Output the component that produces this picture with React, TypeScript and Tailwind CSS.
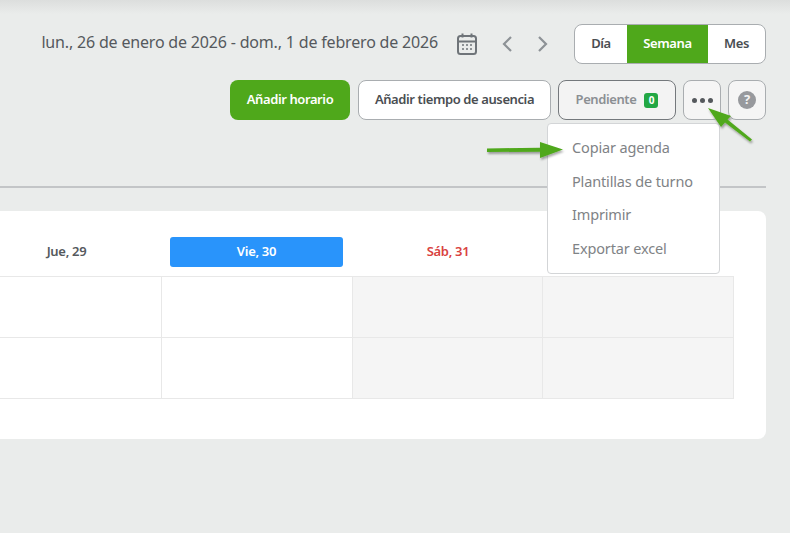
import React from 'react';

const fontStack = { fontFamily: '"Noto Sans", sans-serif' };

const menuItems = ['Copiar agenda', 'Plantillas de turno', 'Imprimir', 'Exportar excel'];

const CalendarIcon = () => (
    <svg width="22" height="24" viewBox="0 0 22 24" fill="none" stroke="#6f7479" strokeWidth="2">
        <rect x="2" y="4" width="18" height="18" rx="2.5" />
        <path d="M2 9.500h18M6.500 1.500v4M15.500 1.500v4" />
        <path d="M6 13h2M10 13h2M14 13h2M6 17h2M10 17h2M14 17h2" strokeWidth="1.6" />
    </svg>
);

const Chevron = ({ flip }: { flip?: boolean }) => (
    <svg width="12" height="18" viewBox="0 0 12 18" fill="none" stroke="#8d9296" strokeWidth="2.2" className={flip ? 'rotate-180' : ''}>
        <path d="M10 2 3 9l7 7" />
    </svg>
);

const App: React.FC = () => {
    return (
        <div className="relative h-[533px] w-[790px] overflow-hidden bg-[#eaeceb]" style={fontStack}>
            <div className="h-[14px] bg-gradient-to-b from-[#dcdedd] to-[#eaeceb]" />

            <div className="mr-[24px] mt-[10px] flex items-center justify-end">
                <span className="mb-[4px] text-[16px] tracking-[-0.18px] text-[#55595d]">lun., 26 de enero de 2026 - dom., 1 de febrero de 2026</span>
                <span className="ml-[18px] flex"><CalendarIcon /></span>
                <span className="ml-[23px] flex"><Chevron /></span>
                <span className="ml-[24px] flex"><Chevron flip /></span>
                <div className="ml-[25px] flex h-[40px] w-[192px] overflow-hidden rounded-lg border border-[#a9adb0] bg-white text-[13px] font-semibold tracking-[-0.4px] text-[#4a4e52]">
                    <div className="flex w-[52px] items-center justify-center">Día</div>
                    <div className="flex w-[81px] items-center justify-center bg-[#4fa81b] text-white">Semana</div>
                    <div className="flex flex-1 items-center justify-center">Mes</div>
                </div>
            </div>

            <div className="mr-[24px] mt-[16px] flex h-[40px] justify-end gap-[7px] text-[13px] font-semibold tracking-[-0.4px]">
                <button className="mr-[1px] w-[120px] rounded-lg bg-[#4fa81b] text-white">Añadir horario</button>
                <button className="w-[193px] rounded-lg border border-[#a9adb0] bg-white text-[#4a4e52]">Añadir tiempo de ausencia</button>
                <button className="flex w-[118px] items-center justify-center gap-[8px] rounded-lg border border-[#74787c] bg-[#f3f3f3] text-[#8b8f93]">
                    Pendiente
                    <span className="flex h-[15px] w-[14px] items-center justify-center rounded-[3px] bg-[#22a744] text-[10px] font-bold text-white">0</span>
                </button>
                <button className="flex w-[38px] items-center justify-center gap-[3px] rounded-lg border border-[#a9adb0] bg-[#f5f5f5]">
                    <span className="h-[5px] w-[5px] rounded-full bg-[#55595d]" />
                    <span className="h-[5px] w-[5px] rounded-full bg-[#55595d]" />
                    <span className="h-[5px] w-[5px] rounded-full bg-[#55595d]" />
                </button>
                <button className="flex w-[38px] items-center justify-center rounded-lg border border-[#a9adb0] bg-[#f5f5f5]">
                    <span className="flex h-[18px] w-[18px] items-center justify-center rounded-full bg-[#97999d] text-[13px] font-bold text-[#f3f3f3]">?</span>
                </button>
            </div>

            <div className="mr-[24px] mt-[66px] h-[2px] bg-[#c3c5c7]" />

            <div className="mr-[24px] mt-[23px] h-[228px] overflow-hidden rounded-r-lg bg-white">
                <div className="-ml-[29px] mt-[26px] grid w-[763px] grid-cols-[191px_191px_190px_190px] text-[13px] font-semibold tracking-[-0.3px]">
                    <div className="flex h-[30px] items-center justify-center text-[#55595d]">Jue, 29</div>
                    <div className="ml-[8px] mr-[10px] flex h-[30px] items-center justify-center rounded-[3px] bg-[#2994fb] text-white">Vie, 30</div>
                    <div className="flex h-[30px] items-center justify-center text-[#d9423f]">Sáb, 31</div>
                    <div className="h-[30px]" />
                </div>
                <div className="-ml-[29px] mt-[9px] grid w-[763px] grid-cols-[191px_191px_190px_190px] grid-rows-[60px_61px] border-b border-r border-t border-[#e8e8e8]">
                    <div className="border-r border-[#e8e8e8]" />
                    <div className="border-r border-[#e8e8e8]" />
                    <div className="border-r border-[#e8e8e8] bg-[#f5f5f5]" />
                    <div className="bg-[#f5f5f5]" />
                    <div className="border-r border-t border-[#e8e8e8]" />
                    <div className="border-r border-t border-[#e8e8e8]" />
                    <div className="border-r border-t border-[#e8e8e8] bg-[#f5f5f5]" />
                    <div className="border-t border-[#e8e8e8] bg-[#f5f5f5]" />
                </div>
            </div>

            <div className="absolute left-[547px] top-[123px] flex h-[151px] w-[173px] flex-col rounded border border-[#d3d5d7] bg-white pl-[24px] pt-[7px]">
                {menuItems.map(item => (
                    <div key={item} className="flex h-[33.7px] items-center text-[14.5px] tracking-[-0.15px] text-[#7f8386]">{item}</div>
                ))}
            </div>

            <svg className="absolute left-0 top-0" width="790" height="533" viewBox="0 0 790 533" fill="#4fa81b">
                <defs>
                    <filter id="arrowShadow" x="-30%" y="-30%" width="160%" height="160%">
                        <feDropShadow dx="1" dy="2" stdDeviation="1.2" floodColor="#000" floodOpacity="0.35" />
                    </filter>
                </defs>
                <g filter="url(#arrowShadow)">
                    <path d="M487 148.500 540 147.700V142L563 149.500 540 158V151.700L487 152Z" />
                    <path d="M708 108 731 116 727.500 119.500 752 139.500 750 141.500 725 122.500 721 127Z" />
                </g>
            </svg>
        </div>
    );
};

export default App;
